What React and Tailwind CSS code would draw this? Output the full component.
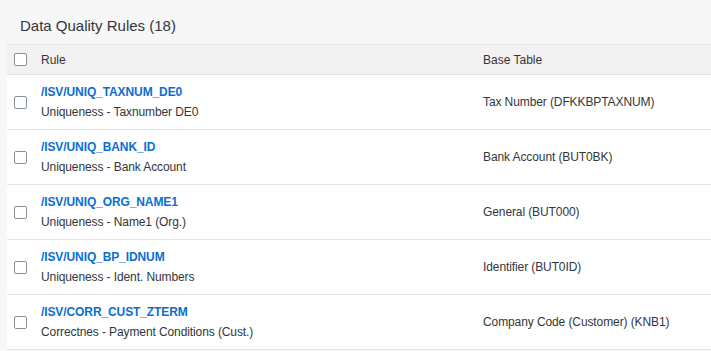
const rows = [
  { id: "/ISV/UNIQ_TAXNUM_DE0", desc: "Uniqueness - Taxnumber DE0", table: "Tax Number (DFKKBPTAXNUM)" },
  { id: "/ISV/UNIQ_BANK_ID", desc: "Uniqueness - Bank Account", table: "Bank Account (BUT0BK)" },
  { id: "/ISV/UNIQ_ORG_NAME1", desc: "Uniqueness - Name1 (Org.)", table: "General (BUT000)" },
  { id: "/ISV/UNIQ_BP_IDNUM", desc: "Uniqueness - Ident. Numbers", table: "Identifier (BUT0ID)" },
  { id: "/ISV/CORR_CUST_ZTERM", desc: "Correctnes - Payment Conditions (Cust.)", table: "Company Code (Customer) (KNB1)" },
];

function Checkbox() {
  return <div className="w-[13px] h-[13px] rounded-[2px] border border-[#89919a] bg-white shrink-0" />;
}

export default function App() {
  return (
    <div className="w-[711px] h-[351px] overflow-hidden bg-[#f7f7f7] text-[#32363a] font-['Liberation_Sans',Arial,sans-serif]">
      <div className="h-[44px] pl-[20px] flex items-center text-[15px] pt-[8px]">Data Quality Rules (18)</div>
      <div className="ml-[7px] bg-white">
        <div className="h-[31px] flex items-center bg-[#f2f2f2] border-t border-b border-[#e5e5e5] text-[12px]">
          <div className="w-[34px] pl-[7px] flex items-center"><Checkbox /></div>
          <div className="w-[442px]">Rule</div>
          <div>Base Table</div>
        </div>
        {rows.map((r) => (
          <div key={r.id} className="h-[55px] flex items-center border-b border-[#e5e5e5] text-[12px]">
            <div className="w-[34px] pl-[7px] flex items-center"><Checkbox /></div>
            <div className="w-[442px] flex flex-col gap-[5px]">
              <div className="text-[#0a6ed1] font-bold leading-[15px] tracking-[-0.1px]">{r.id}</div>
              <div className="leading-[15px] tracking-[-0.1px]">{r.desc}</div>
            </div>
            <div className="tracking-[-0.1px]">{r.table}</div>
          </div>
        ))}
      </div>
    </div>
  );
}
